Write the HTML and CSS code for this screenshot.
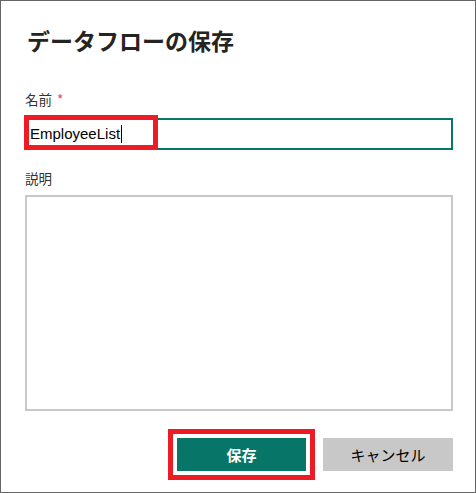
FILE: index.html
```html
<!DOCTYPE html>
<html lang="ja">
  <head>
    <meta charset="UTF-8">
    <meta name="viewport" content="width=device-width, initial-scale=1.0">
    <title>データフローの保存</title>
    <link rel="stylesheet" href="styles.css">
  </head>
  <body>

    <!-- Save dialog -->
    <div class="dialog">
      <h1>データフローの保存</h1>

      <label class="field-label">名前 <span class="required">*</span></label>
      <div class="name-wrap">
        <div class="name-input">EmployeeList<span class="caret"></span></div>
        <span class="mark mark-name"></span>
      </div>

      <label class="field-label desc-label">説明</label>
      <div class="desc-input"></div>

      <div class="actions">
        <button class="btn btn-save">保存</button>
        <button class="btn btn-cancel">キャンセル</button>
      </div>
    </div>

  </body>
</html>
```

FILE: styles.css
```css
body {
  margin: 0;
  padding: 0;
  background-color: #fff;
  font-family: 'Noto Sans CJK JP', 'Liberation Sans', sans-serif;
  color: #252423;
}
.dialog {
  width: 476px;
  height: 493px;
  box-sizing: border-box;
  border: 1px solid #666;
  padding: 24px 22px 0 24px;
  display: flex;
  flex-direction: column;
}
h1 {
  font-size: 23px;
  font-weight: bold;
  line-height: 30px;
  margin: 0 0 0 2px;
  color: #252423;
}
.field-label {
  display: block;
  font-size: 13.5px;
  line-height: 18px;
  margin-top: 35px;
  color: #333;
}
.required {
  color: #e0405a;
  margin-left: 2px;
}
.name-wrap {
  position: relative;
  margin-top: 10px;
}
.name-input {
  height: 32px;
  box-sizing: border-box;
  border: 2px solid #077568;
  padding: 0 3px;
  font-family: 'Liberation Sans', sans-serif;
  font-size: 15px;
  line-height: 28px;
  color: #000;
}
.caret {
  display: inline-block;
  width: 1px;
  height: 18px;
  background-color: #000;
  vertical-align: -4px;
  margin-left: 1px;
}
/* red annotation frames */
.mark-name {
  position: absolute;
  left: -1px;
  top: -3px;
  width: 134px;
  height: 35px;
  box-sizing: border-box;
  border: 5px solid #ed1c24;
}
.desc-label {
  margin-top: 19px;
}
.desc-input {
  height: 216px;
  box-sizing: border-box;
  border: 2px solid #c8c8c8;
  margin-top: 8px;
}
.actions {
  display: flex;
  justify-content: flex-end;
  gap: 17px;
  margin-top: 27px;
}
.btn {
  width: 129px;
  height: 33px;
  border: none;
  font-family: 'Noto Sans CJK JP', sans-serif;
  font-size: 15px;
  padding: 0;
}
.btn-save {
  background-color: #077568;
  color: #fff;
  font-weight: bold;
  box-shadow: 0 0 0 4px #fff, 0 0 0 9px #ed1c24;
}
.btn-cancel {
  width: 130px;
  background-color: #c8c8c8;
  color: #000;
  font-weight: normal;
}
```
